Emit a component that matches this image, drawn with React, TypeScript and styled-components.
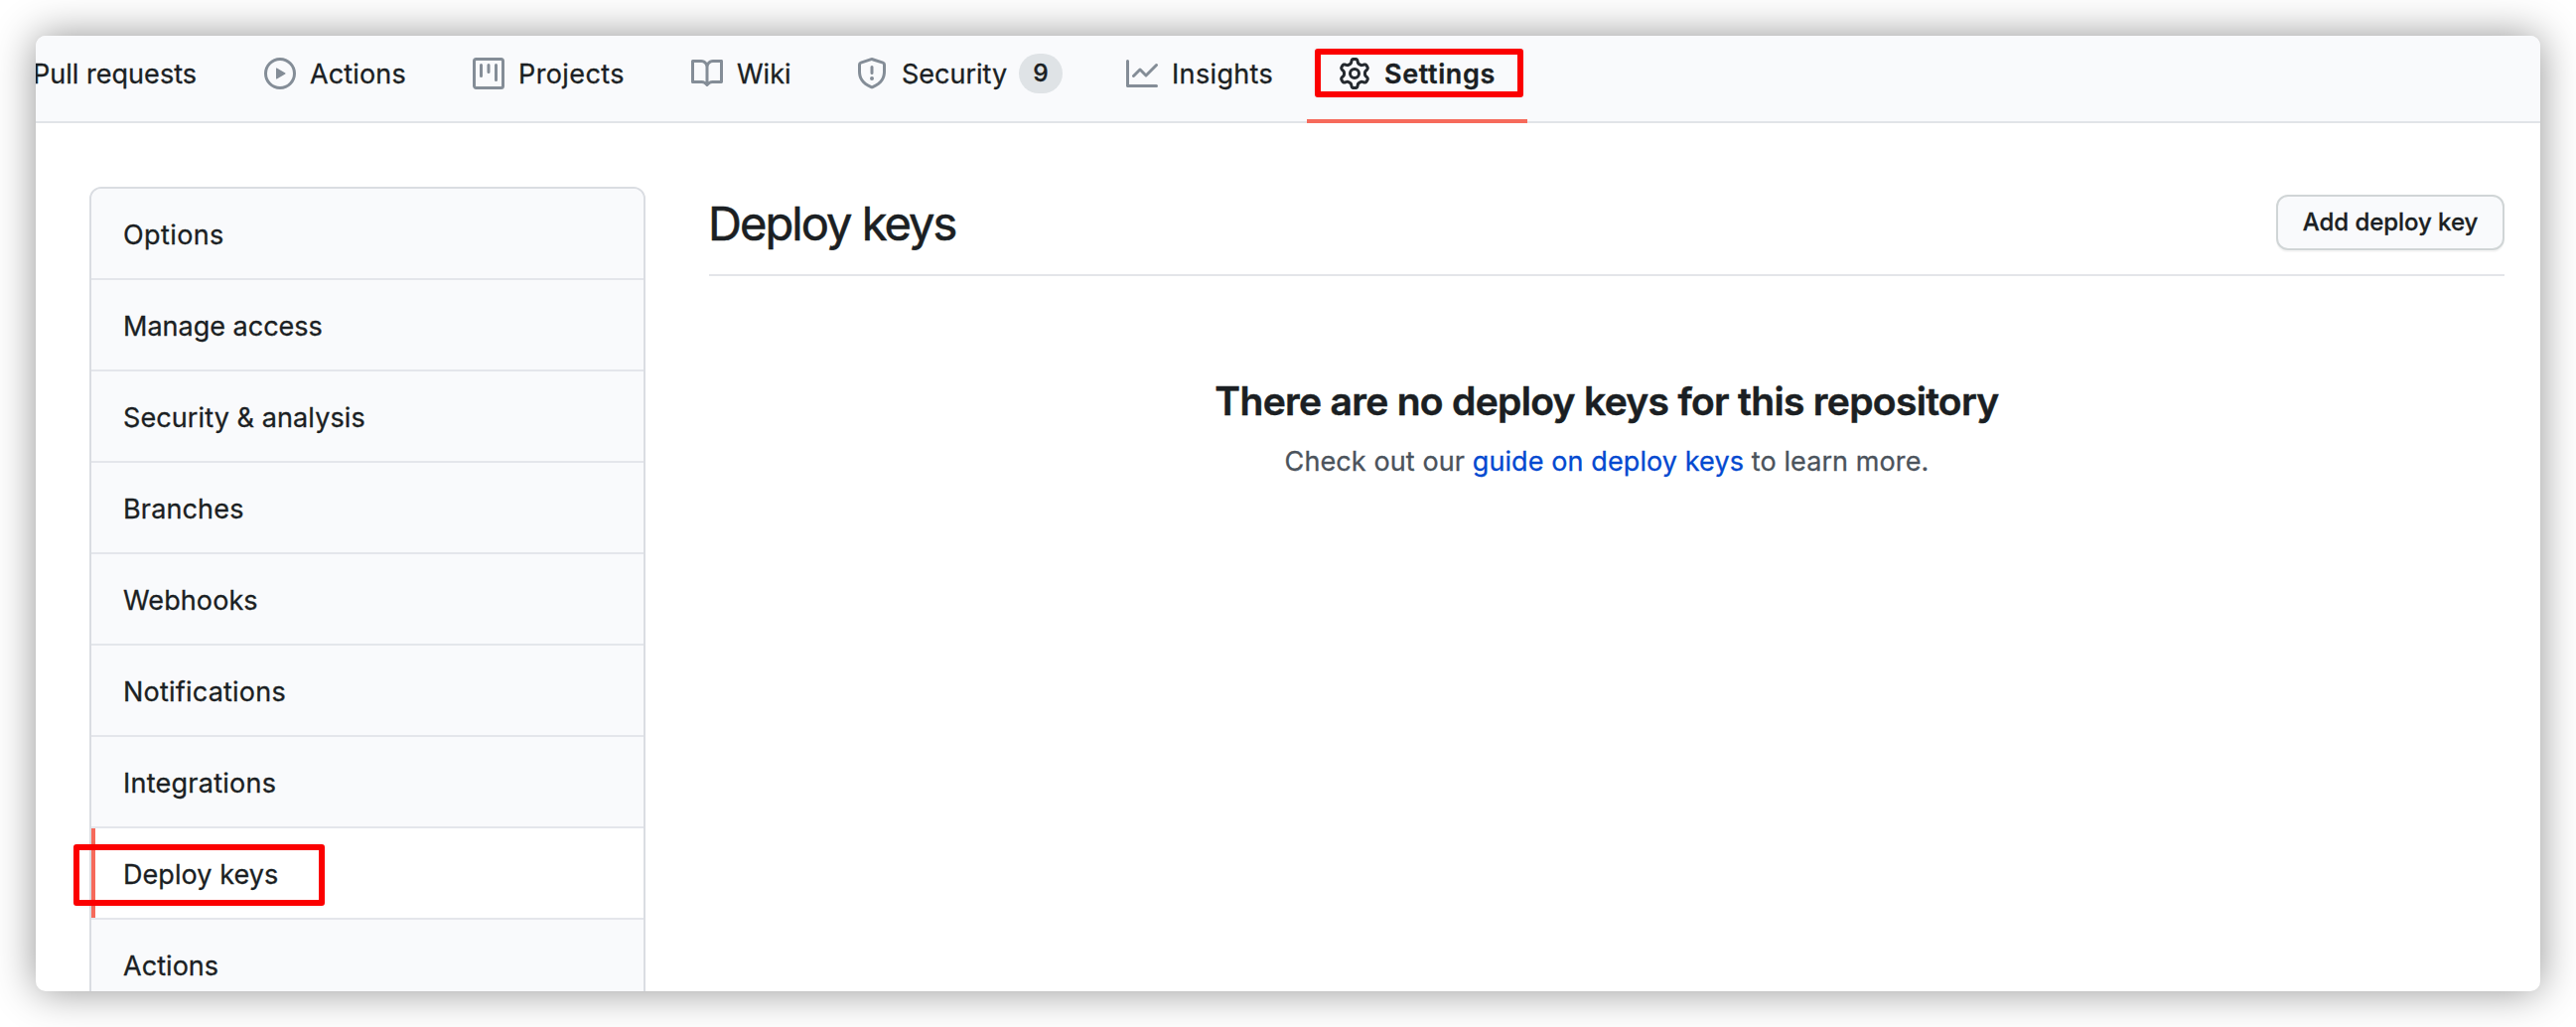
import React from "react";
import styled, { createGlobalStyle, css } from "styled-components";

const GlobalStyle = createGlobalStyle`
  *, *::before, *::after { box-sizing: border-box; }
  body {
    margin: 0;
    background: #fff;
    color: #1b1f23;
    font-family: Inter, "Liberation Sans", sans-serif;
    font-size: 27px;
    -webkit-text-stroke: 0.3px currentColor;
  }
  h1, h2, p, ul { margin: 0; padding: 0; }
`;

const Page = styled.div`
  display: flex;
  height: 1034px;
  padding: 36px;
  overflow: hidden;
`;

const Window = styled.div`
  display: flex;
  flex: 1;
  flex-direction: column;
  overflow: hidden;
  border-radius: 10px;
  background: #fff;
  box-shadow: 0 0 42px rgba(0, 0, 0, 0.43);
`;

const TabBar = styled.header`
  flex: none;
  height: 88px;
  border-bottom: 2px solid #e1e4e8;
  background: #f9fafc;
`;

const Tabs = styled.nav`
  display: flex;
  margin-left: -35px;
`;

const Tab = styled.a<{ $selected?: boolean }>`
  position: relative;
  display: flex;
  flex: none;
  align-items: center;
  height: 88px;
  padding: 0 32px 8px;
  border-bottom: 4px solid ${(p) => (p.$selected ? "#f66a5b" : "transparent")};
  font-weight: ${(p) => (p.$selected ? 600 : 400)};
  line-height: 42px;
  white-space: nowrap;

  svg {
    flex: none;
    margin-right: 14px;
    fill: ${(p) => (p.$selected ? "#24292e" : "#848d97")};
  }
`;

const TabLabel = styled.span<{ $width: number; $spacing?: number }>`
  width: ${(p) => p.$width}px;
  padding-top: 1px;
  letter-spacing: ${(p) => p.$spacing ?? 0}px;
`;

const Counter = styled.span`
  min-width: 44px;
  height: 40px;
  margin-left: 8px;
  border-radius: 20px;
  background: #dfe3e6;
  font-size: 24.5px;
  font-weight: 500;
  line-height: 38px;
  text-align: center;
`;

const highlight = css`
  position: absolute;
  border: 6px solid #fb0000;
  border-radius: 3px;
  box-shadow: 0 0 4px rgba(0, 0, 0, 0.06);
`;

const TabHighlight = styled.span`
  ${highlight}
  inset: 13px 4px 22px 8px;
`;

const Body = styled.div`
  display: flex;
  flex: 1;
  gap: 64px;
  min-height: 0;
  padding: 64px 36px 0 54px;
`;

const Menu = styled.ul`
  flex: none;
  align-self: flex-start;
  width: 560px;
  border: 2px solid #dadde2;
  border-radius: 12px;
  list-style: none;
`;

const MenuItem = styled.li<{ $selected?: boolean; $spacing: number }>`
  position: relative;
  height: 92px;
  padding: 2px 32px 0;
  border-bottom: 2px solid #e4e6eb;
  background: ${(p) => (p.$selected ? "#fff" : "#f9fafc")};
  letter-spacing: ${(p) => p.$spacing}px;
  line-height: 90px;

  &:first-child {
    border-radius: 10px 10px 0 0;
  }

  ${(p) =>
    p.$selected &&
    css`
      &::before {
        content: "";
        position: absolute;
        inset: 0 auto 0 0;
        width: 4px;
        background: #f66a5b;
      }
    `}
`;

const MenuHighlight = styled.span`
  ${highlight}
  top: 16px;
  left: -18px;
  width: 253px;
  height: 62px;
`;

const Content = styled.main`
  flex: 1;
`;

const Subhead = styled.div`
  display: flex;
  align-items: center;
  justify-content: space-between;
  padding: 8px 0 24px;
  border-bottom: 2px solid #e3e5e9;
`;

const Title = styled.h1`
  margin-left: -1px;
  padding-top: 2px;
  font-size: 47px;
  font-weight: 400;
  letter-spacing: -1.95px;
  line-height: 54px;
  -webkit-text-stroke-width: 0.6px;
`;

const Button = styled.button`
  width: 230px;
  height: 56px;
  padding: 0 0 2px;
  border: 2px solid #d0d5d6;
  border-radius: 12px;
  background: #f9fafc;
  box-shadow: 0 2px 0 rgba(27, 31, 35, 0.04);
  color: #1b1f23;
  font: 500 24px Inter, "Liberation Sans", sans-serif;
  letter-spacing: -0.05px;
`;

const Blankslate = styled.section`
  padding-top: 96px;
  text-align: center;
`;

const BlankTitle = styled.h2`
  font-size: 39px;
  font-weight: 600;
  letter-spacing: -0.68px;
  line-height: 60px;
  -webkit-text-stroke-width: 0.5px;
`;

const BlankText = styled.p`
  margin-top: 10px;
  color: #4b535c;
  letter-spacing: 0.1px;
  line-height: 42px;
`;

const Link = styled.a`
  color: #0349d0;
`;

const icons = {
  play: "M1.5 8a6.5 6.5 0 1113 0 6.5 6.5 0 01-13 0zM8 0a8 8 0 100 16A8 8 0 008 0zM6.379 5.227A.25.25 0 006 5.442v5.117a.25.25 0 00.379.214l4.264-2.559a.25.25 0 000-.428L6.379 5.227z",
  project:
    "M1.75 0A1.75 1.75 0 000 1.75v12.5C0 15.216.784 16 1.75 16h12.5A1.75 1.75 0 0016 14.25V1.75A1.75 1.75 0 0014.25 0H1.75zM1.5 1.75a.25.25 0 01.25-.25h12.5a.25.25 0 01.25.25v12.5a.25.25 0 01-.25.25H1.75a.25.25 0 01-.25-.25V1.75zM11.75 3a.75.75 0 00-.75.75v7.5a.75.75 0 001.5 0v-7.5a.75.75 0 00-.75-.75zm-8.25.75a.75.75 0 011.5 0v5.5a.75.75 0 01-1.5 0v-5.5zM8 3a.75.75 0 00-.75.75v3.5a.75.75 0 001.5 0v-3.5A.75.75 0 008 3z",
  book: "M0 1.75A.75.75 0 01.75 1h4.253c1.227 0 2.317.59 3 1.501A3.744 3.744 0 0111.006 1h4.245a.75.75 0 01.75.75v10.5a.75.75 0 01-.75.75h-4.507a2.25 2.25 0 00-1.591.659l-.622.621a.75.75 0 01-1.06 0l-.622-.621A2.25 2.25 0 005.258 13H.75a.75.75 0 01-.75-.75V1.75zm8.755 3a2.25 2.25 0 012.25-2.25H14.5v9h-3.757c-.71 0-1.4.201-1.992.572l.004-7.322zm-1.504 7.324l.004-5.073-.002-2.253A2.25 2.25 0 005.003 2.5H1.5v9h3.757a3.75 3.75 0 011.994.574z",
  shield:
    "M7.467.133a1.75 1.75 0 011.066 0l5.25 1.68A1.75 1.75 0 0115 3.48V7c0 1.566-.32 3.182-1.303 4.682-.983 1.498-2.585 2.813-5.032 3.855a1.7 1.7 0 01-1.33 0c-2.447-1.042-4.049-2.357-5.032-3.855C1.32 10.182 1 8.566 1 7V3.48a1.75 1.75 0 011.217-1.667l5.25-1.68zm.61 1.429a.25.25 0 00-.153 0l-5.25 1.68a.25.25 0 00-.174.238V7c0 1.358.275 2.666 1.057 3.86.784 1.194 2.121 2.34 4.366 3.297a.2.2 0 00.154 0c2.245-.956 3.582-2.104 4.366-3.298C13.225 9.666 13.5 8.36 13.5 7V3.48a.25.25 0 00-.174-.237l-5.25-1.68zM9 10.5a1 1 0 11-2 0 1 1 0 012 0zm-.25-5.75a.75.75 0 10-1.5 0v3a.75.75 0 001.5 0v-3z",
  graph:
    "M1.5 1.75a.75.75 0 00-1.5 0v12.5c0 .414.336.75.75.75h14.5a.75.75 0 000-1.5H1.5V1.75zm14.28 2.53a.75.75 0 00-1.06-1.06L10 7.94 7.53 5.47a.75.75 0 00-1.06 0L3.22 8.72a.75.75 0 001.06 1.06L7 7.06l2.47 2.47a.75.75 0 001.06 0l5.25-5.25z",
  gear: "M7.429 1.525a6.593 6.593 0 011.142 0c.036.003.108.036.137.146l.289 1.105c.147.56.55.967.997 1.189.174.086.341.183.501.29.417.278.97.423 1.53.27l1.102-.303c.11-.03.175.016.195.046.219.31.41.641.573.989.014.031.022.11-.059.19l-.815.806c-.411.406-.562.957-.53 1.456a4.588 4.588 0 010 .582c-.032.499.119 1.05.53 1.456l.815.806c.08.08.073.159.059.19a6.494 6.494 0 01-.573.99c-.02.029-.086.074-.195.045l-1.103-.303c-.559-.153-1.112-.008-1.529.27-.16.107-.327.204-.5.29-.449.222-.851.628-.998 1.189l-.289 1.105c-.029.11-.101.143-.137.146a6.613 6.613 0 01-1.142 0c-.036-.003-.108-.037-.137-.146l-.289-1.105c-.147-.56-.55-.967-.997-1.189a4.502 4.502 0 01-.501-.29c-.417-.278-.97-.423-1.53-.27l-1.102.303c-.11.03-.175-.016-.195-.046a6.492 6.492 0 01-.573-.989c-.014-.031-.022-.11.059-.19l.815-.806c.411-.406.562-.957.53-1.456a4.587 4.587 0 010-.582c.032-.499-.119-1.05-.53-1.456l-.815-.806c-.08-.08-.073-.159-.059-.19a6.44 6.44 0 01.573-.99c.02-.029.086-.075.195-.045l1.103.303c.559.153 1.112.008 1.529-.27.16-.107.327-.204.5-.29.449-.222.851-.628.998-1.189l.289-1.105c.029-.11.101-.143.137-.146zM8 0c-.236 0-.47.01-.701.03-.743.065-1.29.615-1.458 1.261l-.29 1.106c-.017.066-.078.158-.211.224a5.994 5.994 0 00-.668.386c-.123.082-.233.09-.3.071L3.27 2.776c-.644-.177-1.392.02-1.82.63a7.977 7.977 0 00-.704 1.217c-.315.675-.111 1.422.363 1.891l.815.806c.05.048.098.147.088.294a6.084 6.084 0 000 .772c.01.147-.038.246-.088.294l-.815.806c-.474.469-.678 1.216-.363 1.891.2.428.436.835.704 1.218.428.609 1.176.806 1.82.63l1.103-.303c.066-.019.176-.011.299.071.213.143.436.272.668.386.133.066.194.158.212.224l.289 1.106c.169.646.715 1.196 1.458 1.26a8.094 8.094 0 001.402 0c.743-.064 1.29-.614 1.458-1.26l.29-1.106c.017-.066.078-.158.211-.224a5.98 5.98 0 00.668-.386c.123-.082.233-.09.3-.071l1.102.302c.644.177 1.392-.02 1.82-.63.268-.382.505-.789.704-1.217.315-.675.111-1.422-.364-1.891l-.814-.806c-.05-.048-.098-.147-.088-.294a6.1 6.1 0 000-.772c-.01-.147.039-.246.088-.294l.814-.806c.475-.469.679-1.216.364-1.891a7.992 7.992 0 00-.704-1.218c-.428-.609-1.176-.806-1.82-.63l-1.103.303c-.066.019-.176.011-.299-.071a5.991 5.991 0 00-.668-.386c-.133-.066-.194-.158-.212-.224L10.16 1.29C9.99.645 9.444.095 8.701.031A8.094 8.094 0 008 0zm1.5 8a1.5 1.5 0 11-3 0 1.5 1.5 0 013 0zM11 8a3 3 0 11-6 0 3 3 0 016 0z",
};

type TabSpec = {
  label: string;
  width: number;
  spacing?: number;
  icon?: keyof typeof icons;
  count?: number;
  selected?: boolean;
};

const tabs: TabSpec[] = [
  { label: "Pull requests", width: 169, spacing: 0.03 },
  { label: "Actions", width: 100, spacing: 0.15, icon: "play" },
  { label: "Projects", width: 110, spacing: 0.4, icon: "project" },
  { label: "Wiki", width: 56, icon: "book" },
  { label: "Security", width: 110, icon: "shield", count: 9 },
  { label: "Insights", width: 104, spacing: 0.35, icon: "graph" },
  { label: "Settings", width: 112, spacing: 0.6, icon: "gear", selected: true },
];

const menu: { label: string; spacing: number; selected?: boolean }[] = [
  { label: "Options", spacing: 0.4 },
  { label: "Manage access", spacing: 0 },
  { label: "Security & analysis", spacing: 0.1 },
  { label: "Branches", spacing: 0.15 },
  { label: "Webhooks", spacing: 0.1 },
  { label: "Notifications", spacing: 0.22 },
  { label: "Integrations", spacing: 0.25 },
  { label: "Deploy keys", spacing: 0.06, selected: true },
  { label: "Actions", spacing: 0.05 },
];

const Icon = ({ name }: { name: keyof typeof icons }) => (
  <svg width="32" height="32" viewBox="0 0 16 16" aria-hidden="true">
    <path fillRule="evenodd" d={icons[name]} />
  </svg>
);

export default function App() {
  return (
    <Page>
      <GlobalStyle />
      <Window>
        <TabBar>
          <Tabs>
            {tabs.map((tab) => (
              <Tab key={tab.label} $selected={tab.selected}>
                {tab.icon && <Icon name={tab.icon} />}
                <TabLabel $width={tab.width} $spacing={tab.spacing}>
                  {tab.label}
                </TabLabel>
                {tab.count && <Counter>{tab.count}</Counter>}
                {tab.selected && <TabHighlight />}
              </Tab>
            ))}
          </Tabs>
        </TabBar>
        <Body>
          <Menu>
            {menu.map((item) => (
              <MenuItem key={item.label} $selected={item.selected} $spacing={item.spacing}>
                {item.label}
                {item.selected && <MenuHighlight />}
              </MenuItem>
            ))}
          </Menu>
          <Content>
            <Subhead>
              <Title>Deploy keys</Title>
              <Button>Add deploy key</Button>
            </Subhead>
            <Blankslate>
              <BlankTitle>There are no deploy keys for this repository</BlankTitle>
              <BlankText>
                Check out our <Link>guide on deploy keys</Link> to learn more.
              </BlankText>
            </Blankslate>
          </Content>
        </Body>
      </Window>
    </Page>
  );
}
